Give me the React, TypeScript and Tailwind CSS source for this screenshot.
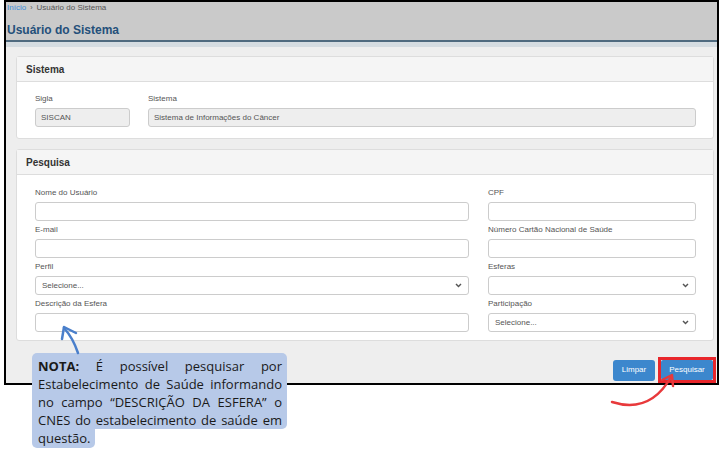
import React from 'react';

const inputBox = 'h-[19px] w-full border border-[#cccccc] rounded-[3px] bg-white';

const Chevron: React.FC = () => (
  <svg width="7" height="5" viewBox="0 0 7 5" className="shrink-0">
    <path d="M1 1 L3.5 3.6 L6 1" fill="none" stroke="#555" strokeWidth="1.4" />
  </svg>
);

const Field: React.FC<{ label: string; children: React.ReactNode }> = ({ label, children }) => (
  <div className="flex flex-col">
    <div className="h-[14px] text-[8px] leading-[10px] text-[#555]">{label}</div>
    {children}
  </div>
);

const Select: React.FC<{ value?: string }> = ({ value }) => (
  <div className={`${inputBox} flex items-center justify-between pl-[6px] pr-[6px]`}>
    <span className="text-[8px] text-[#555]">{value}</span>
    <Chevron />
  </div>
);

const Panel: React.FC<{ title: string; children: React.ReactNode }> = ({ title, children }) => (
  <div className="mr-[2px] border border-[#dddddd] rounded-[3px] bg-white">
    <div className="h-[25px] bg-[#f5f5f5] border-b border-[#dddddd] pl-[9px] flex items-center text-[10px] font-bold text-[#333]">
      {title}
    </div>
    {children}
  </div>
);

const App: React.FC = () => {
  return (
    <div className="relative w-[723px] h-[454px] bg-white overflow-hidden font-['Liberation_Sans',Arial,sans-serif]">
      {/* screenshot frame */}
      <div className="ml-[4px] w-[715px] h-[385px] border-2 border-black flex flex-col">
        <div className="h-[38px] bg-[#cacaca] pl-[1px] pt-[1px] flex flex-col">
          <div className="text-[8px] leading-[10px] text-[#555] flex items-center gap-[4px]">
            <span className="text-[#3f8ed8]">Início</span>
            <span className="text-[7px]">›</span>
            <span>Usuário do Sistema</span>
          </div>
          <div className="mt-[10px] text-[12px] leading-[14px] font-bold text-[#24507a]">Usuário do Sistema</div>
        </div>
        <div className="h-[2px] bg-[#4f6a7f]" />
        <div className="h-[5px] bg-[#d5dce1]" />

        <div className="flex-1 bg-[#eeeeee] pl-[10px] pr-[1px] pt-[9px] flex flex-col">
          <Panel title="Sistema">
            <div className="pl-[18px] pr-[17px] pt-[12px] pb-[11px] flex gap-[18px]">
              <div className="w-[95px]">
                <Field label="Sigla">
                  <div className="h-[19px] border border-[#cccccc] rounded-[3px] bg-[#eeeeee] pl-[5px] flex items-center text-[8px] text-[#555]">
                    SISCAN
                  </div>
                </Field>
              </div>
              <div className="flex-1">
                <Field label="Sistema">
                  <div className="h-[19px] border border-[#cccccc] rounded-[3px] bg-[#eeeeee] pl-[5px] flex items-center text-[8px] text-[#555]">
                    Sistema de Informações do Câncer
                  </div>
                </Field>
              </div>
            </div>
          </Panel>

          <div className="mt-[10px]">
            <Panel title="Pesquisa">
              <div className="pl-[18px] pr-[17px] pt-[13px] pb-[8px] grid grid-cols-[434px_208px] gap-x-[19px] gap-y-[4px]">
                <Field label="Nome do Usuário"><div className={inputBox} /></Field>
                <Field label="CPF"><div className={inputBox} /></Field>
                <Field label="E-mail"><div className={inputBox} /></Field>
                <Field label="Número Cartão Nacional de Saúde"><div className={inputBox} /></Field>
                <Field label="Perfil"><Select value="Selecione..." /></Field>
                <Field label="Esferas"><Select /></Field>
                <Field label="Descrição da Esfera"><div className={inputBox} /></Field>
                <Field label="Participação"><Select value="Selecione..." /></Field>
              </div>
            </Panel>
          </div>

          <div className="mt-[16px] flex items-center justify-end gap-[3px]">
            <button className="h-[21px] w-[42px] rounded-[3px] bg-[#3c87cd] text-white text-[8px]">Limpar</button>
            <div className="border-[3px] border-[#e8262b]">
              <button className="h-[20px] w-[52px] rounded-[2px] bg-[#3c87cd] text-white text-[8px] block">Pesquisar</button>
            </div>
          </div>
        </div>
      </div>

      {/* annotation note */}
      <div className="absolute left-[32px] top-[353px] w-[255px] font-['Open_Sans','Noto_Sans',sans-serif] text-[13px] leading-[18px] text-[#1a1a1a]">
        <div className="bg-[#b7c9e8] rounded-[5px] rounded-bl-none pl-[6px] pr-[5px] pt-[4px]">
          <div className="text-justify [text-align-last:justify]"><b>NOTA:</b> É possível pesquisar por</div>
          <div className="text-justify [text-align-last:justify]">Estabelecimento de Saúde informando</div>
          <div className="text-justify [text-align-last:justify]">no campo “DESCRIÇÃO DA ESFERA” o</div>
          <div className="text-justify [text-align-last:justify]">CNES do estabelecimento de saúde em</div>
        </div>
        <div className="w-[63px] bg-[#b7c9e8] rounded-b-[5px] pl-[6px] pb-[1px]">questão.</div>
      </div>

      {/* arrows */}
      <svg className="absolute left-0 top-0 pointer-events-none" width="723" height="454">
        <path d="M78 353 Q73 338 64 328" fill="none" stroke="#4a7fcb" strokeWidth="2.5" strokeLinecap="round" />
        <path d="M62 339 L64 327 L76 333" fill="none" stroke="#4a7fcb" strokeWidth="2.5" strokeLinecap="round" strokeLinejoin="round" />
        <path d="M612 402 Q650 414 671 377" fill="none" stroke="#e8393b" strokeWidth="2.5" strokeLinecap="round" />
        <path d="M662 380 L672 375 L673 386" fill="none" stroke="#e8393b" strokeWidth="2.5" strokeLinecap="round" strokeLinejoin="round" />
      </svg>
    </div>
  );
};

export default App;
